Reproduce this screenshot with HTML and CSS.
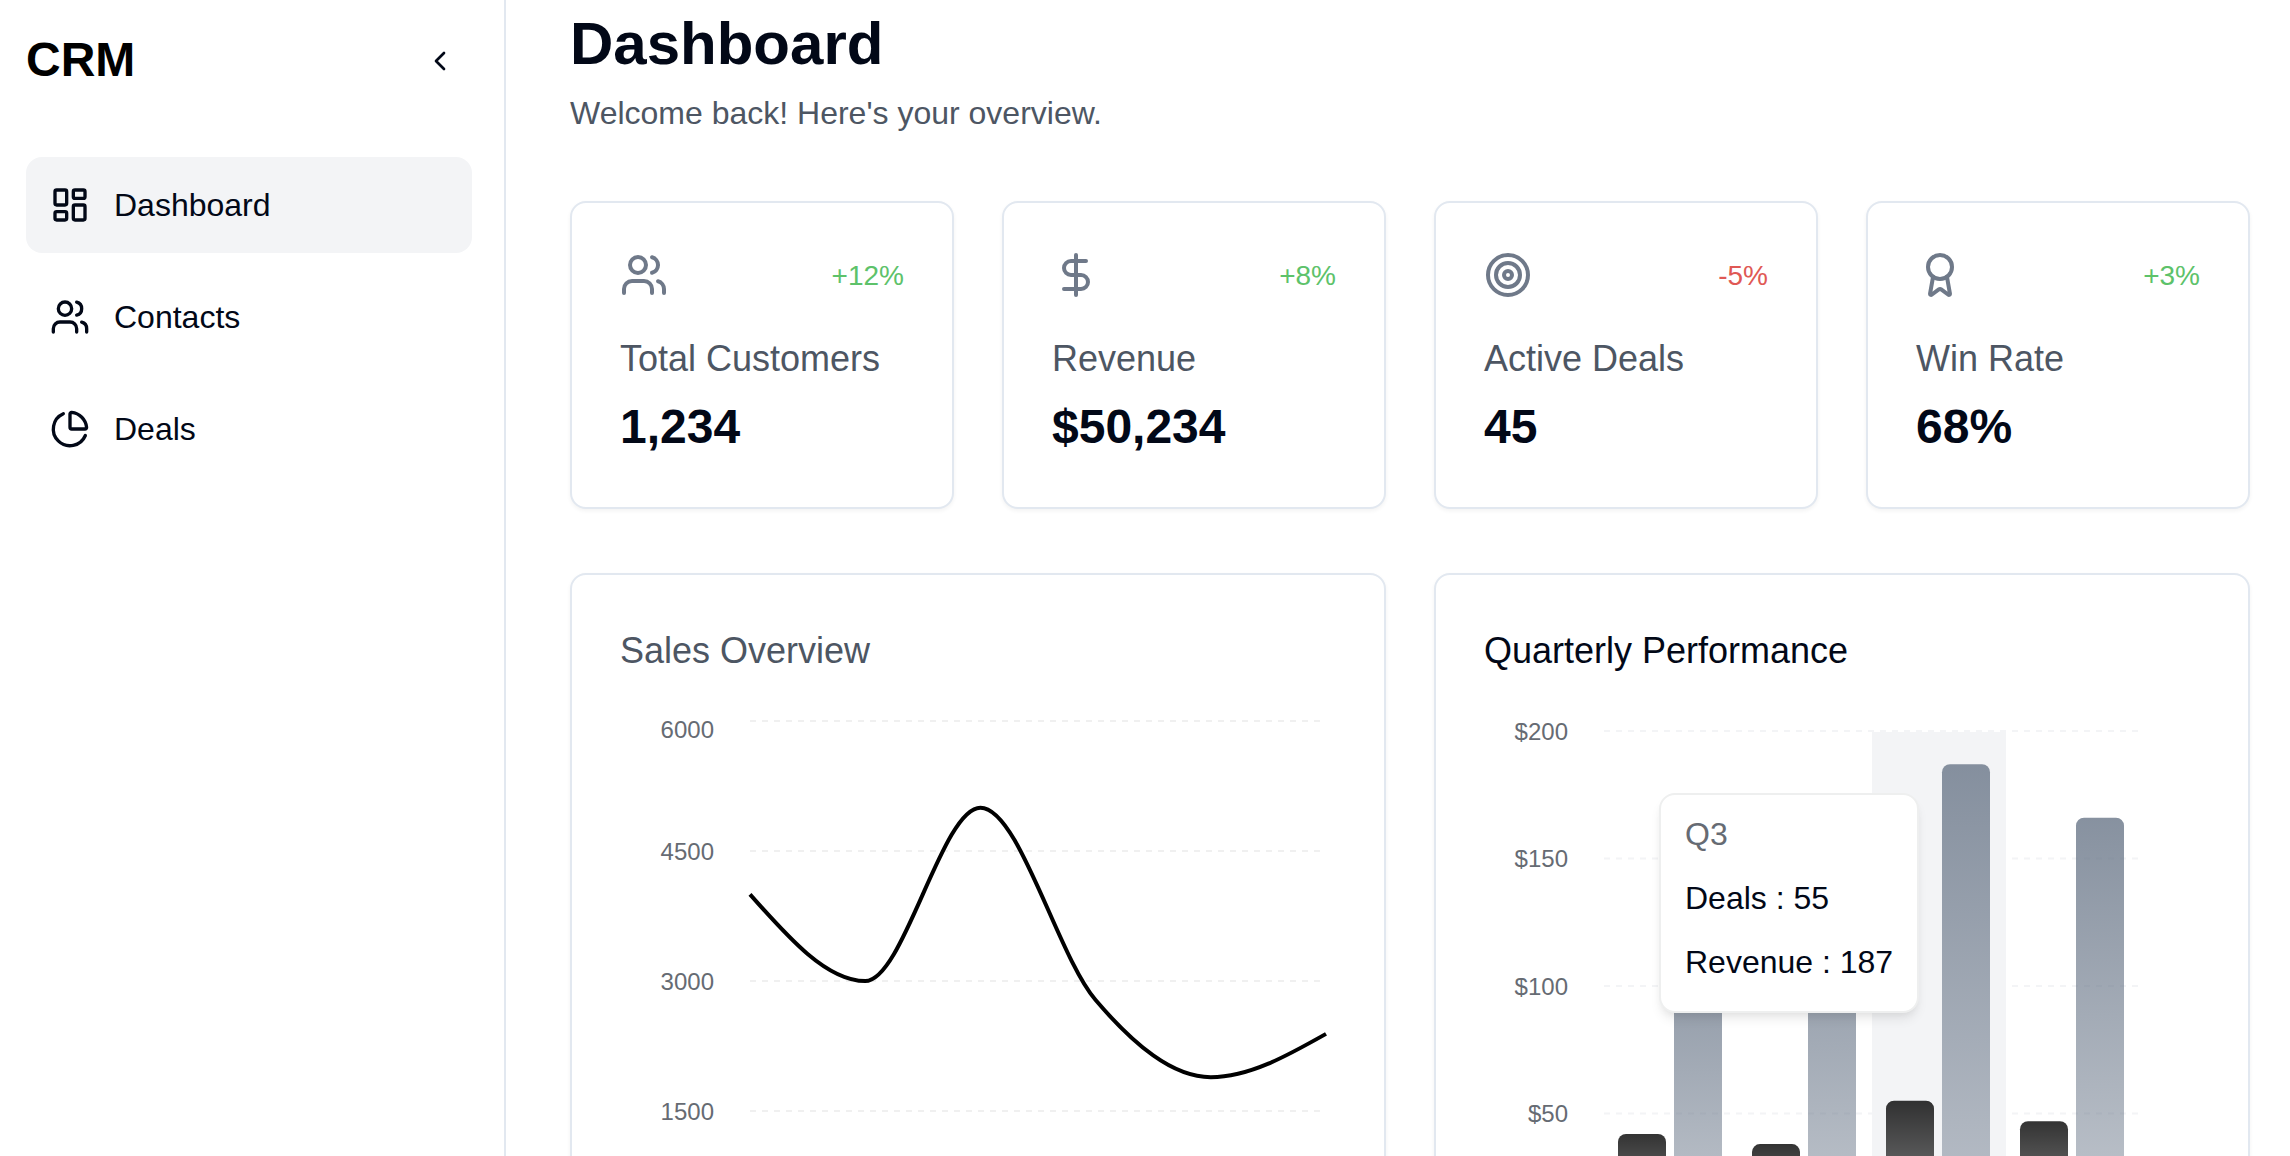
FILE: index.html
```html
<!DOCTYPE html>
<html lang="en">
<head>
<meta charset="utf-8">
<title>CRM</title>
<link rel="stylesheet" href="styles.css">
</head>
<body>
<div class="app">
  <aside class="sidebar">
    <div class="sidebar-head">
      <div class="brand">CRM</div>
      <button class="collapse" aria-label="Collapse sidebar"><svg class="icon icon-sm" viewBox="0 0 24 24"><path d="m15 18-6-6 6-6"/></svg></button>
    </div>
    <nav class="nav">
      <a class="nav-item active"><svg class="icon icon-md" viewBox="0 0 24 24"><rect width="7" height="9" x="3" y="3" rx="1"/><rect width="7" height="5" x="14" y="3" rx="1"/><rect width="7" height="9" x="14" y="12" rx="1"/><rect width="7" height="5" x="3" y="16" rx="1"/></svg>Dashboard</a>
      <a class="nav-item"><svg class="icon icon-md" viewBox="0 0 24 24"><path d="M16 21v-2a4 4 0 0 0-4-4H6a4 4 0 0 0-4 4v2"/><circle cx="9" cy="7" r="4"/><path d="M22 21v-2a4 4 0 0 0-3-3.87"/><path d="M16 3.13a4 4 0 0 1 0 7.75"/></svg>Contacts</a>
      <a class="nav-item"><svg class="icon icon-md" viewBox="0 0 24 24"><path d="M21 12c.552 0 1.005-.449.95-.998a10 10 0 0 0-8.953-8.951c-.55-.055-.998.398-.998.95v8a1 1 0 0 0 1 1z"/><path d="M21.21 15.89A10 10 0 1 1 8 2.83"/></svg>Deals</a>
    </nav>
  </aside>
  <main class="main">
    <header class="page-head">
      <h1 class="title">Dashboard</h1>
      <p class="subtitle">Welcome back! Here's your overview.</p>
    </header>
    <section class="stats">
      <article class="card">
        <div class="stat-top"><svg class="icon icon-lg" viewBox="0 0 24 24"><path d="M16 21v-2a4 4 0 0 0-4-4H6a4 4 0 0 0-4 4v2"/><circle cx="9" cy="7" r="4"/><path d="M22 21v-2a4 4 0 0 0-3-3.87"/><path d="M16 3.13a4 4 0 0 1 0 7.75"/></svg><span class="up">+12%</span></div>
        <h2 class="label">Total Customers</h2>
        <p class="value">1,234</p>
      </article>
      <article class="card">
        <div class="stat-top"><svg class="icon icon-lg" viewBox="0 0 24 24"><path d="M12 2v20"/><path d="M17 5H9.5a3.5 3.5 0 0 0 0 7h5a3.5 3.5 0 0 1 0 7H6"/></svg><span class="up">+8%</span></div>
        <h2 class="label">Revenue</h2>
        <p class="value">$50,234</p>
      </article>
      <article class="card">
        <div class="stat-top"><svg class="icon icon-lg" viewBox="0 0 24 24"><circle cx="12" cy="12" r="10"/><circle cx="12" cy="12" r="6"/><circle cx="12" cy="12" r="2"/></svg><span class="down">-5%</span></div>
        <h2 class="label">Active Deals</h2>
        <p class="value">45</p>
      </article>
      <article class="card">
        <div class="stat-top"><svg class="icon icon-lg" viewBox="0 0 24 24"><path d="m15.477 12.89 1.515 8.526a.5.5 0 0 1-.81.47l-3.58-2.687a1 1 0 0 0-1.197 0l-3.586 2.686a.5.5 0 0 1-.81-.469l1.514-8.526"/><circle cx="12" cy="8" r="6"/></svg><span class="up">+3%</span></div>
        <h2 class="label">Win Rate</h2>
        <p class="value">68%</p>
      </article>
    </section>
    <section class="charts">
      <article class="card">
        <h2 class="label">Sales Overview</h2>
        <!-- y = 8 + (6000 - value) * 130 / 1500 -->
        <svg class="chart" width="716" height="600" viewBox="0 0 716 600">
          <g class="grid grid-line"><path d="M130 8H700M130 138H700M130 268H700M130 398H700"/></g>
          <g class="tick"><text x="94" y="25">6000</text><text x="94" y="147">4500</text><text x="94" y="277">3000</text><text x="94" y="407">1500</text></g>
          <path class="series" d="M130 181.33C168.4 224.67 206.8 268 245.2 268C283.6 268 322 94.67 360.4 94.67C398.8 94.67 437.2 242.15 475.6 287.07C514 331.99 552.4 364.2 590.8 364.2C629.2 364.2 667.6 342.54 706 320.87"/>
        </svg>
      </article>
      <article class="card">
        <h2 class="label strong">Quarterly Performance</h2>
        <div class="plot">
          <svg class="chart" width="716" height="600" viewBox="0 0 716 600">
            <defs>
              <linearGradient id="deals" x1="0" y1="0" x2="0" y2="1"><stop offset="0" stop-color="#000" stop-opacity=".8"/><stop offset="1" stop-color="#000" stop-opacity=".4"/></linearGradient>
              <linearGradient id="revenue" x1="0" y1="0" x2="0" y2="1"><stop offset="0" stop-color="#697688" stop-opacity=".8"/><stop offset="1" stop-color="#697688" stop-opacity=".4"/></linearGradient>
            </defs>
            <g class="grid grid-bar"><path d="M120 18H654M120 145.5H654M120 273H654M120 400.5H654"/></g>
            <rect class="cursor" x="388" y="19" width="134" height="509"/>
            <g class="tick"><text x="84" y="27">$200</text><text x="84" y="154">$150</text><text x="84" y="282">$100</text><text x="84" y="409">$50</text></g>
            <g fill="url(#deals)">
              <path d="M134 528V428.9a8 8 0 0 1 8-8h32a8 8 0 0 1 8 8V528z"/>
              <path d="M268 528V439.1a8 8 0 0 1 8-8h32a8 8 0 0 1 8 8V528z"/>
              <path d="M402 528V395.75a8 8 0 0 1 8-8h32a8 8 0 0 1 8 8V528z"/>
              <path d="M536 528V416.15a8 8 0 0 1 8-8h32a8 8 0 0 1 8 8V528z"/>
            </g>
            <g fill="url(#revenue)">
              <path d="M190 528V218.55a8 8 0 0 1 8-8h32a8 8 0 0 1 8 8V528z"/>
              <path d="M324 528V172.65a8 8 0 0 1 8-8h32a8 8 0 0 1 8 8V528z"/>
              <path d="M458 528V59.15a8 8 0 0 1 8-8h32a8 8 0 0 1 8 8V528z"/>
              <path d="M592 528V112.7a8 8 0 0 1 8-8h32a8 8 0 0 1 8 8V528z"/>
            </g>
          </svg>
          <div class="tooltip">
            <p class="tip-label">Q3</p>
            <p>Deals : 55</p>
            <p>Revenue : 187</p>
          </div>
        </div>
      </article>
    </section>
  </main>
</div>
</body>
</html>
```

FILE: styles.css
```css
* { box-sizing: border-box; }
body {
  margin: 0;
  height: 100vh;
  overflow: hidden;
  background: #fff;
  color: #020817;
  font-family: "Liberation Sans", Arial, sans-serif;
  font-size: 32px;
}
h1, h2, p { margin: 0; }
.app { display: flex; height: 100vh; overflow: hidden; }

.sidebar {
  flex: none;
  width: 506px;
  padding: 28px 32px 0 26px;
  border-right: 2px solid #e2e8f0;
}
.sidebar-head { display: flex; align-items: center; justify-content: space-between; height: 66px; padding-right: 16px; }
.brand { padding-bottom: 2px; font-size: 48px; font-weight: 700; line-height: 64px; color: #000; }
.collapse { display: flex; padding: 0; border: 0; background: none; color: inherit; }
.nav { display: flex; flex-direction: column; gap: 16px; margin-top: 63px; }
.nav-item { display: flex; align-items: center; gap: 24px; height: 96px; padding: 0 24px; border-radius: 16px; }
.nav-item.active { background: #f3f4f6; }

.icon { flex: none; fill: none; stroke: currentColor; stroke-width: 2; stroke-linecap: round; stroke-linejoin: round; }
.icon-sm { width: 32px; height: 32px; }
.icon-md { width: 40px; height: 40px; }
.icon-lg { width: 48px; height: 48px; color: #6f7989; }

.main { flex: 1; min-width: 0; padding: 8px 40px 0 64px; }
.page-head { height: 193px; }
.title { font-size: 60px; line-height: 72px; font-weight: 700; }
.subtitle { margin-top: 9px; line-height: 48px; color: #4d5663; }

.card { height: 308px; padding: 48px; border: 2px solid #e2e8f0; border-radius: 16px; background: #fff; box-shadow: 0 2px 4px rgba(0, 0, 0, .05); }
.stats { display: grid; grid-template-columns: repeat(4, 1fr); gap: 48px; }
.stat-top { display: flex; align-items: center; justify-content: space-between; font-size: 28px; line-height: 40px; }
.stat-top span { padding-top: 2px; }
.up { color: #5dc26a; }
.down { color: #e05854; }
.label { font-size: 36px; line-height: 56px; font-weight: 400; color: #4d5663; }
.stats .label { margin-top: 32px; }
.label.strong { color: #020817; }
.value { margin-top: 8px; font-size: 48px; line-height: 64px; font-weight: 700; }

.charts { display: grid; grid-template-columns: 1fr 1fr; gap: 48px; margin-top: 64px; }
.charts .card { height: 800px; }
.chart { display: block; margin-top: 34px; overflow: visible; }
.grid { fill: none; stroke-width: 2; stroke-dasharray: 6 6; }
.grid-line { stroke: #f0f0f0; }
.grid-bar { stroke: #f3f4f6; }
.tick { fill: #666b73; font-size: 24px; text-anchor: end; }
.series { fill: none; stroke: #000; stroke-width: 4; }
.cursor { fill: #f3f4f6; }
.plot { position: relative; }
.tooltip {
  position: absolute;
  left: 175px;
  top: 80px;
  width: 260px;
  height: 220px;
  padding: 15px 24px;
  border: 2px solid #eeefef;
  border-radius: 16px;
  background: #fff;
  line-height: 48px;
  white-space: nowrap;
  box-shadow: 0 8px 12px -2px rgba(0, 0, 0, .08), 0 4px 8px -4px rgba(0, 0, 0, .08);
}
.tooltip p + p { margin-top: 16px; }
.tip-label { color: #666b73; }
```
